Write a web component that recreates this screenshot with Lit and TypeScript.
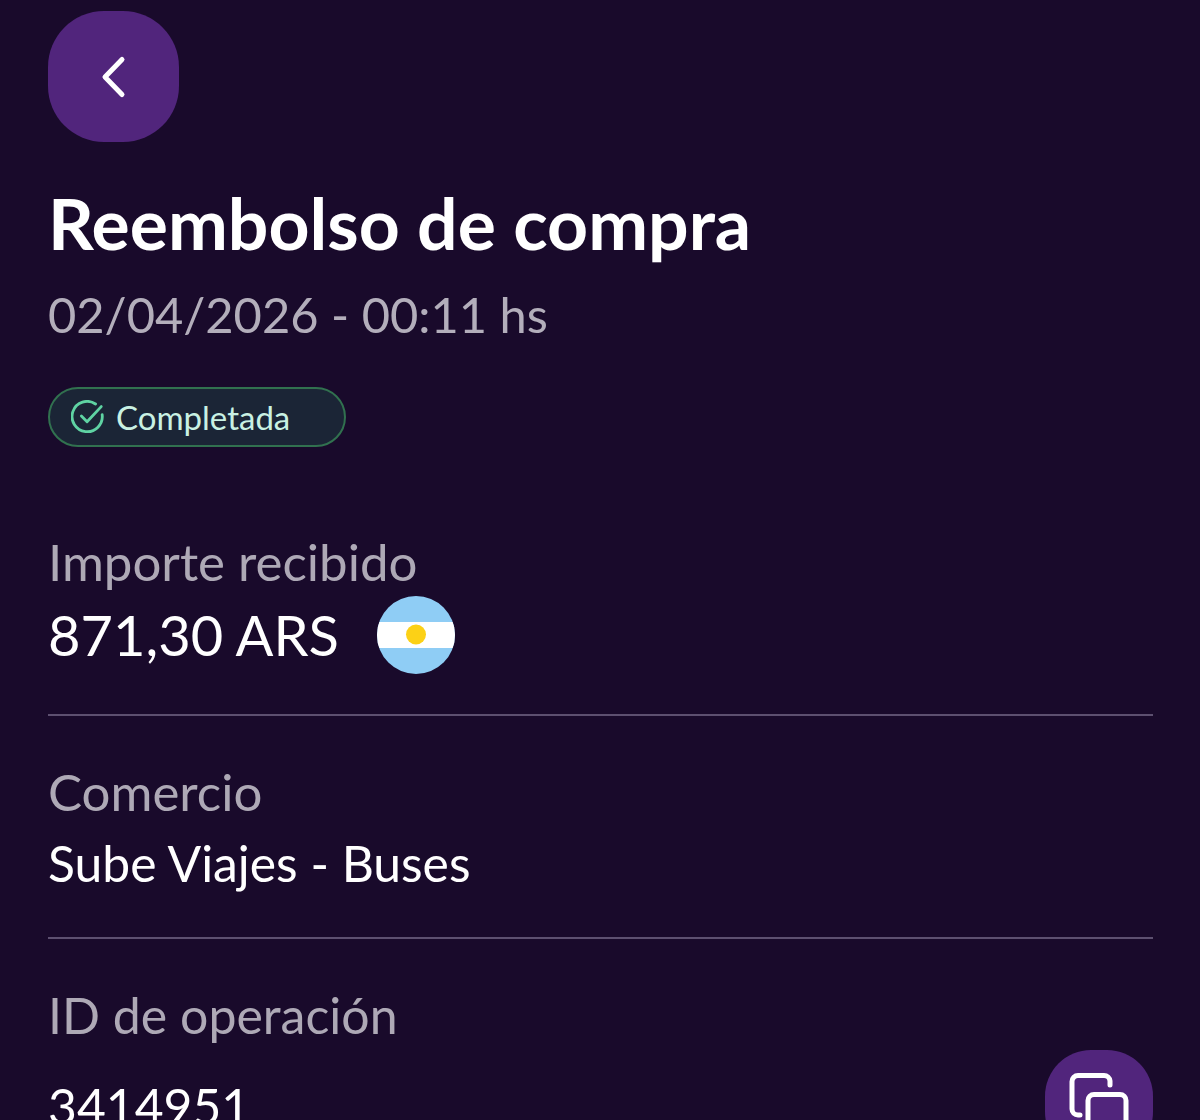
import { LitElement, css, html } from "lit";
import { customElement } from "lit/decorators.js";

@customElement("app-root")
export class AppRoot extends LitElement {
  static styles = css`
    :host {
      display: block;
      height: 1120px;
      overflow: hidden;
      background: #190a2b;
      font-family: Lato, "Open Sans", sans-serif;
      color: #fff;
    }
    .page {
      display: flex;
      flex-direction: column;
      padding: 11px 47px 0 48px;
    }
    .icon-btn {
      display: flex;
      align-items: center;
      justify-content: center;
      background: #51257c;
      flex: none;
    }
    .back {
      width: 131px;
      height: 131px;
      border-radius: 56px;
    }
    .back svg {
      width: 44px;
      height: 44px;
    }
    h1 {
      margin: 39px 0 0 0;
      font-size: 71.5px;
      line-height: 82px;
      font-weight: 700;
    }
    .date {
      margin-top: 21px;
      font-size: 48.8px;
      line-height: 60px;
      color: #b3aebb;
    }
    .badge {
      display: flex;
      align-items: center;
      gap: 11px;
      box-sizing: border-box;
      width: 298px;
      height: 60px;
      margin-top: 43px;
      padding-left: 21px;
      border: 2px solid #31714f;
      border-radius: 30px;
      background: #1b2536;
      color: #c9f1e3;
      font-size: 33px;
    }
    .badge svg {
      width: 34px;
      height: 34px;
    }
    .row {
      border-bottom: 2px solid #5d5070;
      padding-bottom: 40px;
    }
    .label {
      font-size: 51px;
      line-height: 60px;
      color: #aea9b6;
    }
    .value {
      display: flex;
      align-items: center;
      font-size: 49.8px;
      line-height: 60px;
    }
    .amount {
      font-size: 56px;
      margin-top: 4px;
    }
    .flag {
      width: 78px;
      height: 78px;
      margin-left: 38px;
    }
    .first {
      margin-top: 85px;
    }
    .second {
      margin-top: 46px;
      padding-bottom: 44px;
    }
    .second .value {
      margin-top: 11px;
    }
    .third {
      margin-top: 46px;
      display: flex;
      justify-content: space-between;
      align-items: flex-start;
    }
    .third .label {
      font-size: 50px;
    }
    .third .value {
      margin-top: 31px;
    }
    .copy {
      width: 108px;
      height: 108px;
      border-radius: 46px;
      margin-top: 65px;
    }
    .copy svg {
      width: 64px;
      height: 64px;
    }
  `;

  render() {
    return html`
      <div class="page">
        <div class="icon-btn back">
          <svg viewBox="0 0 44 44" fill="none" stroke="#fff" stroke-width="5" stroke-linecap="round" stroke-linejoin="round">
            <path d="M30 4.5 L13 22 L30 39.5" />
          </svg>
        </div>
        <h1>Reembolso de compra</h1>
        <div class="date">02/04/2026 - 00:11 hs</div>
        <div class="badge">
          <svg viewBox="0 0 36 36" fill="none" stroke="#5fd3a3" stroke-width="3" stroke-linecap="round" stroke-linejoin="round">
            <path d="M33 15.5 A16 16 0 1 1 26 4.2" />
            <path d="M11 17 L17 23 L32 7" />
          </svg>
          <span>Completada</span>
        </div>
        <div class="row first">
          <div class="label">Importe recibido</div>
          <div class="value amount">
            <span>871,30 ARS</span>
            <svg class="flag" viewBox="0 0 78 78">
              <defs>
                <clipPath id="disc"><circle cx="39" cy="39" r="39" /></clipPath>
              </defs>
              <g clip-path="url(#disc)">
                <rect width="78" height="78" fill="#8fcdf5" />
                <rect y="26" width="78" height="26" fill="#fff" />
                <circle cx="39" cy="38.5" r="10" fill="#fcd116" />
              </g>
            </svg>
          </div>
        </div>
        <div class="row second">
          <div class="label">Comercio</div>
          <div class="value">Sube Viajes - Buses</div>
        </div>
        <div class="third">
          <div>
            <div class="label">ID de operación</div>
            <div class="value">3414951</div>
          </div>
          <div class="icon-btn copy">
            <svg viewBox="0 0 64 64" fill="none" stroke="#fff" stroke-width="5" stroke-linecap="round" stroke-linejoin="round">
              <path d="M43 13 V9 A6 6 0 0 0 37 3.5 H11 A6 6 0 0 0 5 9.5 V37 A6 6 0 0 0 11 43 H13" />
              <rect x="21" y="22.5" width="38" height="38" rx="6" />
            </svg>
          </div>
        </div>
      </div>
    `;
  }
}
